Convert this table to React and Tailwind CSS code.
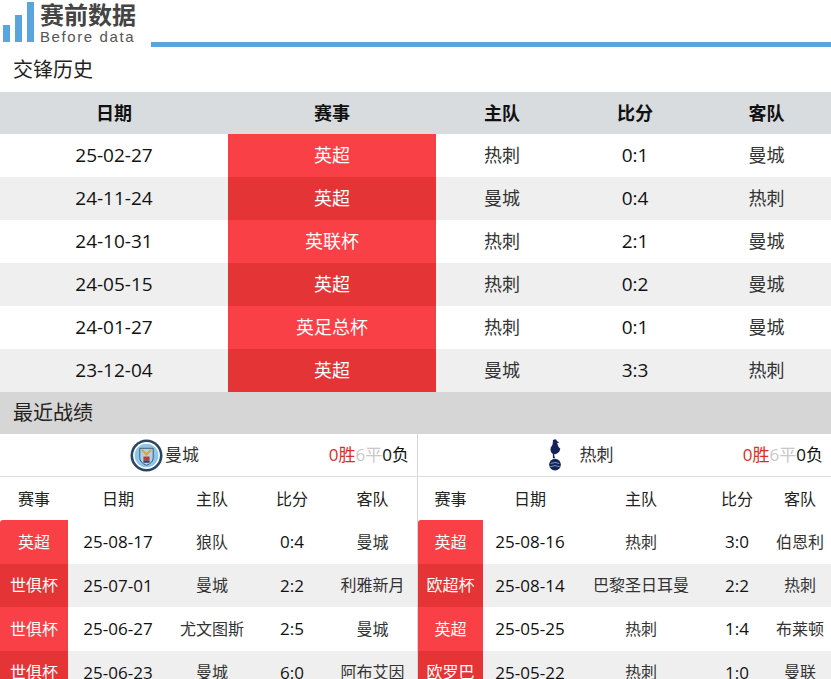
import React from "react";

const h2h = [
  ["25-02-27", "英超", "热刺", "0:1", "曼城"],
  ["24-11-24", "英超", "曼城", "0:4", "热刺"],
  ["24-10-31", "英联杯", "热刺", "2:1", "曼城"],
  ["24-05-15", "英超", "热刺", "0:2", "曼城"],
  ["24-01-27", "英足总杯", "热刺", "0:1", "曼城"],
  ["23-12-04", "英超", "曼城", "3:3", "热刺"],
];

const cityGames = [
  ["英超", "25-08-17", "狼队", "0:4", "曼城"],
  ["世俱杯", "25-07-01", "曼城", "2:2", "利雅新月"],
  ["世俱杯", "25-06-27", "尤文图斯", "2:5", "曼城"],
  ["世俱杯", "25-06-23", "曼城", "6:0", "阿布艾因"],
];

const spursGames = [
  ["英超", "25-08-16", "热刺", "3:0", "伯恩利"],
  ["欧超杯", "25-08-14", "巴黎圣日耳曼", "2:2", "热刺"],
  ["英超", "25-05-25", "热刺", "1:4", "布莱顿"],
  ["欧罗巴", "25-05-22", "热刺", "1:0", "曼联"],
];

const cityCols = ["w-[68px]", "w-[100px]", "w-[88px]", "w-[72px]", "w-[89px]"];
const spursCols = ["w-[65px]", "w-[94px]", "w-[128px]", "w-[64px]", "w-[62px]"];

const Logo = () => (
  <div className="flex items-end h-[48px] shrink-0">
    <div className="flex items-end gap-[5px] pl-[3px] pb-[6px] h-full">
      <div className="w-[7px] h-[17px] bg-[#5aa5dd]" />
      <div className="w-[7px] h-[27px] bg-[#5aa5dd]" />
      <div className="w-[7px] h-[40px] bg-[#5aa5dd]" />
    </div>
    <div className="flex flex-col pl-[6px] pt-[1px] h-full">
      <span className="text-[24px] leading-[28px] font-bold text-[#444]">赛前数据</span>
      <span className="text-[15px] leading-[16px] text-[#555] tracking-[1.6px] font-['Liberation_Sans',sans-serif]">Before data</span>
    </div>
  </div>
);

const CityBadge = () => (
  <svg width="33" height="33" viewBox="0 0 32 32">
    <circle cx="16" cy="16" r="15.5" fill="#2b4560" />
    <circle cx="16" cy="16" r="13" fill="#fff" />
    <circle cx="16" cy="16" r="11.5" fill="#8fc5e8" />
    <path d="M9.5 9 H22.5 V18 Q22.5 23 16 25.5 Q9.5 23 9.5 18 Z" fill="#a9d3ef" stroke="#2b4560" strokeWidth="0.8" />
    <path d="M11.5 10.5 L16 15 L20.5 10.5" stroke="#d8a92b" strokeWidth="2" fill="none" />
    <rect x="13" y="17" width="6" height="4" fill="#c9353b" />
    <rect x="13" y="21" width="6" height="2" fill="#2b4560" />
  </svg>
);

const SpursBadge = () => (
  <svg width="16" height="34" viewBox="0 0 14 32">
    <path d="M5 2 Q8 0 9 3 L11 4 L9 5 Q10 9 12 10 L11 13 Q8 16 6 15 L7 19 L5 19 L5 15 Q2 13 3 9 Q5 7 5 4 Z" fill="#132257" />
    <circle cx="7" cy="25" r="5.5" fill="#132257" />
    <path d="M3 24 Q7 22 11 24" stroke="#8fb0d8" strokeWidth="0.8" fill="none" />
    <path d="M2.5 27 Q7 25 11.5 27" stroke="#8fb0d8" strokeWidth="0.8" fill="none" />
  </svg>
);

const Record = () => (
  <div className="text-[17px] pr-[8px]">
    <span className="text-[#e02a2a]">0胜</span>
    <span className="text-[#c8c8c8]">6平</span>
    <span className="text-[#111]">0负</span>
  </div>
);

const RecentTable = ({ badge, name, games, cols, bordered, gap }) => (
  <div className={`flex flex-col ${bordered ? "border-l border-[#d6d6d6] w-[414px]" : "w-[417px]"}`}>
    <div className="flex items-center h-[43px] border-b border-[#dcdcdc]">
      <div className={`flex-1 flex items-center justify-center ${gap}`}>
        {badge}
        <span className="text-[17px] text-[#333]">{name}</span>
      </div>
      <Record />
    </div>
    <div className="flex h-[43px] items-center text-[16px] text-[#222]">
      {["赛事", "日期", "主队", "比分", "客队"].map((t, i) => (
        <div key={t} className={`${cols[i]} text-center`}>{t}</div>
      ))}
    </div>
    {games.map((g, r) => (
      <div key={r} className={`flex h-[43.5px] items-center text-[16px] ${r % 2 ? "bg-[#f0eff0]" : "bg-white"}`}>
        <div className={`${cols[0]} h-full flex items-center justify-center text-white ${r % 2 ? "bg-[#e53435]" : "bg-[#f84046]"} ${r === 0 ? "rounded-tl-[3px]" : ""}`}>
          {g[0]}
        </div>
        <div className={`${cols[1]} text-center text-[17px] text-[#111]`}>{g[1]}</div>
        <div className={`${cols[2]} text-center text-[#333]`}>{g[2]}</div>
        <div className={`${cols[3]} text-center text-[17px] text-[#111]`}>{g[3]}</div>
        <div className={`${cols[4]} text-center text-[#333] whitespace-nowrap`}>{g[4]}</div>
      </div>
    ))}
  </div>
);

export default function App() {
  const topCols = ["w-[228px]", "w-[208px]", "w-[132px]", "w-[134px]", "w-[129px]"];
  return (
    <div className="w-[831px] h-[679px] overflow-hidden bg-white font-['Open_Sans','Noto_Sans_CJK_SC',sans-serif]">
      {/* logo bar */}
      <div className="flex items-start h-[48px]">
        <Logo />
        <div className="flex-1 ml-[15px] mt-[42px] h-[5px] bg-[#5aa5dd]" />
      </div>

      {/* head to head */}
      <div className="h-[44px] flex items-center pl-[13px] text-[20px] text-[#222]">交锋历史</div>
      <div className="flex h-[42px] items-center bg-[#d9dcdf] text-[18px] font-bold text-[#111]">
        {["日期", "赛事", "主队", "比分", "客队"].map((t, i) => (
          <div key={t} className={`${topCols[i]} text-center`}>{t}</div>
        ))}
      </div>
      {h2h.map((row, r) => (
        <div key={r} className={`flex h-[43px] items-center text-[18px] ${r % 2 ? "bg-[#f0eff0]" : "bg-white"}`}>
          <div className={`${topCols[0]} text-center text-[19px] text-[#111]`}>{row[0]}</div>
          <div className={`${topCols[1]} h-full flex items-center justify-center text-white ${r % 2 ? "bg-[#e53435]" : "bg-[#f84046]"}`}>
            {row[1]}
          </div>
          <div className={`${topCols[2]} text-center text-[#333]`}>{row[2]}</div>
          <div className={`${topCols[3]} text-center text-[19px] text-[#111]`}>{row[3]}</div>
          <div className={`${topCols[4]} text-center text-[#333]`}>{row[4]}</div>
        </div>
      ))}

      {/* recent form */}
      <div className="h-[42px] flex items-center pl-[13px] text-[20px] text-[#222] bg-[#d6d6d6]">最近战绩</div>
      <div className="flex">
        <RecentTable badge={<CityBadge />} name="曼城" games={cityGames} cols={cityCols} gap="gap-[2px]" />
        <RecentTable badge={<SpursBadge />} name="热刺" games={spursGames} cols={spursCols} gap="gap-[16px]" bordered />
      </div>
    </div>
  );
}
